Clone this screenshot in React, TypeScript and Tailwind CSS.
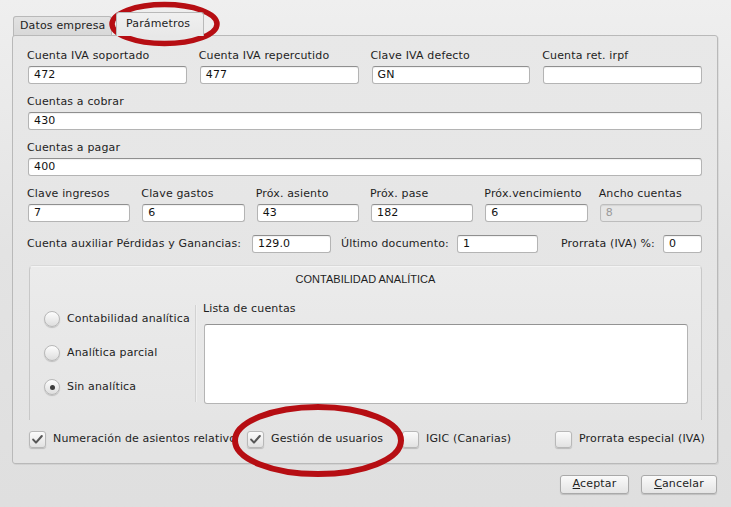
import React from "react";

function Field({ label, value, disabled }: { label: string; value?: string; disabled?: boolean }) {
  return (
    <div className="flex flex-col">
      <div className="h-[14px] leading-[14px] whitespace-nowrap -ml-[1px] translate-y-[1px]">{label}</div>
      <Input value={value} disabled={disabled} className="mt-[4px]" />
    </div>
  );
}

function Input({ value, disabled, className }: { value?: string; disabled?: boolean; className?: string }) {
  return (
    <div
      className={
        "h-[18px] rounded-[3px] border flex items-center pl-[5px] leading-[14px] " +
        (disabled
          ? "bg-[#e6e6e6] border-[#bdbdbd] text-[#9a9a9a] shadow-[inset_0_1px_1px_rgba(0,0,0,0.08)] "
          : "bg-white border-[#b4b4b4] border-t-[#8f8f8f] text-[#111] shadow-[inset_0_1px_1px_rgba(0,0,0,0.06)] ") +
        (className ?? "")
      }
    >
      {value}
    </div>
  );
}

function Radio({ checked, label }: { checked?: boolean; label: string }) {
  return (
    <div className="h-[34px] flex items-center">
      <div className="w-[16px] h-[16px] rounded-full border border-[#b8b8b8] bg-gradient-to-b from-[#fdfdfd] to-[#dedede] shadow-[0_1px_1px_rgba(0,0,0,0.18)] flex items-center justify-center">
        {checked && <div className="w-[5px] h-[5px] rounded-full bg-[#3c3c3c]" />}
      </div>
      <span className="ml-[7px] whitespace-nowrap">{label}</span>
    </div>
  );
}

function Check({ checked }: { checked?: boolean }) {
  return (
    <div className="flex-none w-[17px] h-[17px] rounded-[3px] border border-[#b8b8b8] bg-gradient-to-b from-[#fbfbfb] to-[#e2e2e2] shadow-[0_1px_1px_rgba(0,0,0,0.18)] flex items-center justify-center">
      {checked && (
        <svg width="13" height="13" viewBox="0 0 13 13">
          <path d="M2.2 6.6 L5 9.6 L10.8 3" fill="none" stroke="#575757" strokeWidth="2.1" strokeLinecap="round" strokeLinejoin="round" />
        </svg>
      )}
    </div>
  );
}

function Button({ children, w }: { children: React.ReactNode; w: string }) {
  return (
    <div
      className={
        "h-[19px] rounded-[3px] border border-[#a9a9a9] bg-gradient-to-b from-[#fafafa] to-[#e4e4e4] shadow-[0_1px_1px_rgba(0,0,0,0.15)] flex items-center justify-center " +
        w
      }
    >
      {children}
    </div>
  );
}

export default function App() {
  return (
    <div className="relative w-[731px] h-[507px] overflow-hidden bg-gradient-to-b from-[#efefef] via-[#e3e3e3] to-[#dfdfdf] font-['DejaVu_Sans',sans-serif] text-[11px] tracking-[0.15px] text-[#1e1e1e]">
      <div className="flex flex-col pl-[12px] pr-[13px] pt-[12px]">
        {/* tabs */}
        <div className="flex items-end h-[24px] pl-[1px]">
          <div className="h-[20px] w-[99px] border border-b-0 border-[#b9b9b9] rounded-t-[3px] bg-gradient-to-b from-[#e2e2e2] to-[#d8d8d8] pl-[6px] flex items-center whitespace-nowrap">
            Datos empresa
          </div>
          <div className="relative z-10 h-[24px] w-[88px] ml-[4px] border border-b-0 border-[#b9b9b9] rounded-t-[3px] bg-gradient-to-b from-[#f0f0f0] to-[#e8e8e8] pl-[9px] flex items-center whitespace-nowrap">
            Parámetros
          </div>
        </div>
        {/* panel */}
        <div className="-mt-[1px] h-[429px] rounded-[3px] border border-[#b9b9b9] bg-gradient-to-b from-[#e8e8e8] to-[#e3e3e3] shadow-[1px_1px_0_rgba(0,0,0,0.06)] pt-[12px] px-[15px] flex flex-col">
          <div className="grid grid-cols-4 gap-x-[13px]">
            <Field label="Cuenta IVA soportado" value="472" />
            <Field label="Cuenta IVA repercutido" value="477" />
            <Field label="Clave IVA defecto" value="GN" />
            <Field label="Cuenta ret. irpf" value="" />
          </div>
          <div className="mt-[10px]">
            <Field label="Cuentas a cobrar" value="430" />
          </div>
          <div className="mt-[10px]">
            <Field label="Cuentas a pagar" value="400" />
          </div>
          <div className="mt-[10px] grid grid-cols-6 gap-x-[12px]">
            <Field label="Clave ingresos" value="7" />
            <Field label="Clave gastos" value="6" />
            <Field label="Próx. asiento" value="43" />
            <Field label="Próx. pase" value="182" />
            <Field label="Próx.vencimiento" value="6" />
            <Field label="Ancho cuentas" value="8" disabled />
          </div>
          <div className="mt-[13px] flex items-center h-[18px]">
            <div className="w-[225px] flex-none whitespace-nowrap -ml-[1px]">Cuenta auxiliar Pérdidas y Ganancias:</div>
            <Input value="129.0" className="w-[79px] flex-none" />
            <div className="w-[126px] flex-none pl-[10px] whitespace-nowrap">Último documento:</div>
            <Input value="1" className="w-[81px] flex-none" />
            <div className="w-[125px] flex-none pl-[23px] whitespace-nowrap">Prorrata (IVA) %:</div>
            <Input value="0" className="flex-1" />
          </div>
          {/* group box */}
          <div className="mt-[13px] ml-[1px] h-[154px] rounded-t-[4px] border border-b-0 border-[#c8c8c8] border-t-[#f4f4f4] bg-gradient-to-b from-[#ebebeb] to-[#e5e5e5] shadow-[0_-1px_0_rgba(0,0,0,0.05)] flex flex-col pt-[5px]">
            <div className="h-[14px] leading-[14px] text-center font-['Liberation_Sans',sans-serif] text-[11px] tracking-normal">
              CONTABILIDAD ANALÍTICA
            </div>
            <div className="mt-[16px] flex">
              <div className="w-[165px] flex-none pl-[14px] flex flex-col">
                <Radio label="Contabilidad analítica" />
                <Radio label="Analítica parcial" />
                <Radio checked label="Sin analítica" />
              </div>
              <div className="mt-[3px] h-[97px] w-[2px] flex-none border-l border-[#d2d2d2] border-r border-r-[#efefef]" />
              <div className="flex-1 flex flex-col pl-[6px] pr-[13px]">
                <div className="h-[14px] leading-[14px]">Lista de cuentas</div>
                <div className="mt-[8px] ml-[1px] h-[80px] rounded-[3px] border border-[#b4b4b4] border-t-[#939393] bg-white" />
              </div>
            </div>
          </div>
          {/* checkboxes */}
          <div className="mt-[11px] ml-[1px] flex items-center h-[17px]">
            <div className="w-[218px] flex-none flex items-center">
              <Check checked />
              <span className="ml-[7px] w-[183px] overflow-hidden whitespace-nowrap">Numeración de asientos relativos</span>
            </div>
            <div className="w-[155px] flex-none flex items-center">
              <Check checked />
              <span className="ml-[7px] whitespace-nowrap">Gestión de usuarios</span>
            </div>
            <div className="w-[153px] flex-none flex items-center">
              <Check />
              <span className="ml-[7px] whitespace-nowrap">IGIC (Canarias)</span>
            </div>
            <div className="flex-1 flex items-center">
              <Check />
              <span className="ml-[7px] whitespace-nowrap">Prorrata especial (IVA)</span>
            </div>
          </div>
        </div>
      </div>
      {/* buttons */}
      <div className="mt-[11px] flex justify-end gap-[12px] pr-[14px]">
        <Button w="w-[69px]">
          <span><span className="underline">A</span>ceptar</span>
        </Button>
        <Button w="w-[76px]">
          <span><span className="underline">C</span>ancelar</span>
        </Button>
      </div>
      {/* annotation ellipses */}
      <svg className="absolute left-0 top-0 pointer-events-none" width="731" height="507" viewBox="0 0 731 507">
        <ellipse cx="164.5" cy="24" rx="52.5" ry="19.5" fill="none" stroke="#b60e13" strokeWidth="5.5" />
        <ellipse cx="318" cy="440.5" rx="83" ry="33.5" fill="none" stroke="#b60e13" strokeWidth="6" />
      </svg>
    </div>
  );
}
